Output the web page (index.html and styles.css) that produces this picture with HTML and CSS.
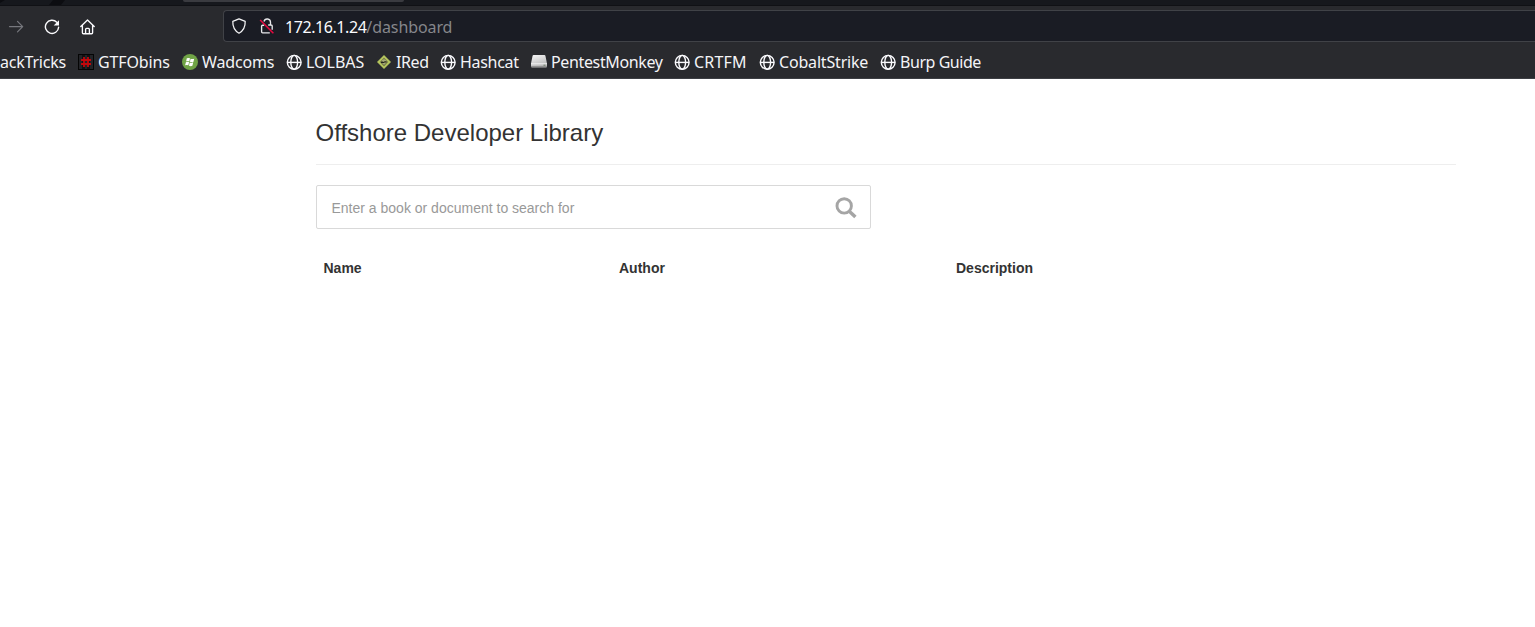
FILE: index.html
```html
<!DOCTYPE html>
<html lang="en">
<head>
<meta charset="utf-8">
<title>Offshore Developer Library</title>
<link rel="stylesheet" href="styles.css">
</head>
<body>
<svg class="defs" width="0" height="0" aria-hidden="true">
  <symbol id="globe" viewBox="0 0 16 16"><g fill="none" stroke="#fbfbfe" stroke-width="1.4"><circle cx="8.200" cy="8.300" r="6.900"/><ellipse cx="8.200" cy="8.300" rx="3.400" ry="6.900"/><path d="M1.300 8.400h13.800"/></g></symbol>
</svg>
<header class="browser">
  <div class="tabs"><svg class="tab-mark" width="70" height="5" viewBox="0 0 70 5"><path d="M0 3 5 0H0zM49 5l4-5h12l-4 5z" fill="#0c0d11"/></svg><span class="tab"></span></div>
  <div class="toolbar">
    <nav class="nav">
      <svg width="16" height="16" viewBox="0 0 16 16" fill="none" stroke="#77787e" stroke-width="1.2" stroke-linecap="round" stroke-linejoin="round"><path d="M1.500 7.600h13M9.500 2.400 14.700 7.600 9.500 12.800"/></svg>
      <svg width="16" height="16" viewBox="0 0 16 16"><path d="M12.800 3.300A6.600 6.600 0 1 0 14.600 8.200" fill="none" stroke="#fbfbfe" stroke-width="1.400" stroke-linecap="round"/><path d="M15 1.200v5.300H9.700z" fill="#fbfbfe"/></svg>
      <svg width="16" height="16" viewBox="0 0 16 16" fill="none" stroke="#fbfbfe" stroke-width="1.350" stroke-linecap="round" stroke-linejoin="round"><path d="M.8 7.600 7.500.9l6.700 6.700M2.400 6.500v7.200q0 1 1 1h8.200q1 0 1-1V6.500M5.600 14.500v-4q0-1.200 1-1.200h1.800q1 0 1 1.200v4"/></svg>
    </nav>
    <div class="address">
      <svg class="shield" width="16" height="16" viewBox="0 0 16 16" fill="none" stroke="#f4f4f6" stroke-width="1.250" stroke-linejoin="round"><path d="M8 .8 14.200 3.300C14.400 9 12.500 12.800 8 15.200 3.500 12.800 1.600 9 1.800 3.300z"/></svg>
      <svg class="lock" width="16" height="16" viewBox="0 0 16 16" fill="none"><path d="M5 3.500a3.300 3.300 0 0 1 6.500.8V7H9.200M11.500 7h.6q1.100 0 1.100 1.100v3.700M5.200 7.200H3.600q-1 0-1 1v5.600q0 1 1 1h7.200" stroke="#e8e8eb" stroke-width="1.350"/><path d="M1.200 2 14.400 15.300" stroke="#e5093f" stroke-width="1.600"/></svg>
      <span class="url"><b>172.16.1.24</b>/dashboard</span>
    </div>
  </div>
  <nav class="bookmarks">
    <a class="mark w-tricks"><span>ackTricks</span></a>
    <a class="mark w-gtfo"><svg width="16" height="16" viewBox="0 0 16 16"><path fill="#050505" d="M0 0h16v16H0z"/><path fill="#222327" d="M1 1h14v14H1z"/><path fill="#111113" d="M4 1h3v14H4zM9 1h3v14H9z"/><path d="M6 3v10M10 3v10M3 6h10M3 10h10" stroke="#c0080c" stroke-width="1.800"/></svg><span>GTFObins</span></a>
    <a class="mark w-wad"><svg width="16" height="16" viewBox="0 0 16 16"><circle cx="8" cy="8" r="8" fill="#70a346"/><path fill="#fff" d="M4.800 4.300Q6.500 3.500 8 4.300L7.300 7.400Q5.700 6.700 4.100 7.400zM8.600 4.700Q10.200 5.500 12.200 4.700L11.400 7.900Q9.600 8.500 7.900 7.800zM3.900 8.200Q5.600 7.500 7.100 8.200L6.300 11.300Q4.800 10.600 3.100 11.300zM7.700 8.600Q9.500 9.300 11.200 8.600L10.400 11.800Q8.700 12.500 7 11.700z"/></svg><span>Wadcoms</span></a>
    <a class="mark w-lol"><svg width="16" height="16"><use href="#globe"/></svg><span>LOLBAS</span></a>
    <a class="mark w-ired"><svg width="16" height="16" viewBox="0 0 16 16"><path fill="#b4c45d" d="m8 1 7 7L8 15 1 8z"/><path fill="#66683f" d="m8 3.800 4 4.100-4 4.300-4-4.300z"/><path fill="#a6a977" d="M5.500 6.500 8 5l2.500 1.500L8 8zM6 9h4l-2 2z"/><path d="M5 8.500h3l1.500-1.500" fill="none" stroke="#24261e"/></svg><span>IRed</span></a>
    <a class="mark w-hash"><svg width="16" height="16"><use href="#globe"/></svg><span>Hashcat</span></a>
    <a class="mark w-monkey"><svg width="16" height="16" viewBox="0 0 16 16"><defs><linearGradient id="drive" x2=".4" y2="1"><stop stop-color="#f8f8f8"/><stop offset="1" stop-color="#b8b8b8"/></linearGradient></defs><path fill="url(#drive)" d="M2.600 1h10.800q.8 0 1 .8L16 9.500v3q0 .8-.8.8H.8q-.8 0-.8-.8v-3l1.600-7.700q.2-.8 1-.8z"/><path fill="#f1f1f1" d="M0 9.300h16v1H0z"/><path fill="#929292" d="M0 12h16v.6q0 .8-.8.8H.8q-.8 0-.8-.8z"/><path fill="#6b7c66" d="M12.500 10.700h2v1h-2z"/></svg><span>PentestMonkey</span></a>
    <a class="mark w-crtfm"><svg width="16" height="16"><use href="#globe"/></svg><span>CRTFM</span></a>
    <a class="mark w-cobalt"><svg width="16" height="16"><use href="#globe"/></svg><span>CobaltStrike</span></a>
    <a class="mark w-burp"><svg width="16" height="16"><use href="#globe"/></svg><span>Burp Guide</span></a>
  </nav>
</header>
<main class="page">
  <h1 class="title">Offshore Developer Library</h1>
  <form class="search">
    <span class="hint">Enter a book or document to search for</span>
    <svg width="22" height="22" viewBox="0 0 22 22" fill="none" stroke="#a5a5a5"><circle cx="9.200" cy="8.900" r="7.200" stroke-width="2.900"/><path d="m14 14 6.400 6" stroke-width="3.500"/></svg>
  </form>
  <div class="columns"><span>Name</span><span>Author</span><span>Description</span></div>
</main>
</body>
</html>
```
FILE: styles.css
```css
* { box-sizing: border-box; }
body { margin: 0; height: 627px; overflow: hidden; background: #fff; color: #333; font-family: "Liberation Sans", Arial, sans-serif; }
svg { display: block; flex: none; }
.defs { position: absolute; }

.browser { height: 79px; background: #292a2e; border-bottom: 1px solid #3c3e43; font-family: "Noto Sans", sans-serif; color: #f4f4f7; }
.tabs { display: flex; height: 6px; background: #16181d; border-bottom: 1px solid #101115; }
.tab-mark { margin-right: 113px; }
.tab { width: 221px; height: 2px; background: #3a3b40; border-radius: 0 0 4px 4px; }
.toolbar { display: flex; height: 36px; padding-top: 4px; }
.nav { display: flex; align-items: center; gap: 20px; width: 223px; padding: 2px 0 0 8px; }
.address { display: flex; align-items: center; flex: 1; height: 32px; padding-left: 7px; background: #1a1c24; border: 1px solid #404247; border-right: 0; border-radius: 4px 0 0 4px; }
.lock { margin-left: 12px; }
.url { margin-left: 10px; padding-top: 2px; font-size: 16px; line-height: 22px; letter-spacing: -0.1px; color: #85868b; white-space: nowrap; }
.url b { font-weight: 400; letter-spacing: -0.43px; color: #fbfbfe; }

.bookmarks { display: flex; align-items: center; height: 36px; padding-top: 4px; }
.mark { display: flex; align-items: center; flex: none; gap: 4px; font-size: 16px; line-height: 22px; white-space: nowrap; }
.w-tricks { width: 78px; letter-spacing: -0.22px; }
.w-gtfo { width: 104px; letter-spacing: -0.12px; }
.w-wad { width: 104px; letter-spacing: -0.15px; }
.w-lol { width: 90px; }
.w-ired { width: 64px; letter-spacing: -0.4px; }
.w-hash { width: 91px; letter-spacing: -0.3px; }
.w-monkey { width: 143px; letter-spacing: -0.36px; }
.w-crtfm { width: 85px; letter-spacing: 0.2px; }
.w-cobalt { width: 121px; letter-spacing: -0.18px; }
.w-burp { letter-spacing: -0.45px; }

.page { width: 1140px; margin-left: 316px; padding-top: 40px; }
.title { margin: 0 0 20px; height: 46px; border-bottom: 1px solid #eee; font-size: 24px; font-weight: 400; line-height: 27px; text-indent: -0.5px; }
.search { display: flex; align-items: center; justify-content: space-between; width: 555px; height: 44px; margin: 0; padding: 2px 13px 0 14.5px; border: 1px solid #d9d9d9; border-radius: 2px; }
.hint { font-size: 14px; line-height: 20px; color: #999; }
.columns { display: grid; grid-template-columns: 295.5px 337px 1fr; margin-top: 29px; padding-left: 7.5px; font-size: 14px; font-weight: 700; line-height: 20px; }
```
